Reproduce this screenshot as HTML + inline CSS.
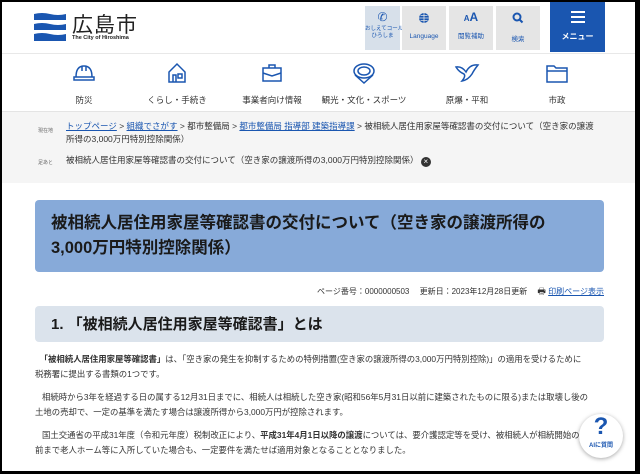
<!DOCTYPE html>
<html><head><meta charset="utf-8"><style>
*{margin:0;padding:0;box-sizing:border-box}
body{width:640px;height:474px;overflow:hidden;background:#000;font-family:"Liberation Sans","Noto Sans CJK JP",sans-serif;color:#333}
#pg{position:absolute;left:2px;top:2px;width:633px;height:469px;background:#fff;overflow:hidden}
.abs{position:absolute}
.btn{position:absolute;top:4px;height:44px;background:#e5e5e5;text-align:center;font-size:6.5px;color:#1a56b0}
.nav{position:absolute;top:60px;text-align:center;font-size:8.5px;color:#333;width:100px}
.nav svg{display:block;margin:0 auto 10px}
.bc{font-size:8.5px;color:#333;line-height:13px}
.bc a{color:#1a56b0;text-decoration:underline}
p{font-size:8.4px;line-height:15px;color:#333;white-space:nowrap}
</style></head><body><div id="pg">
<svg class="abs" style="left:32px;top:10px" width="32" height="30" viewBox="0 0 32 30"><g fill="#1a56b0"><path d="M0 2 Q8 0 16 2 Q24 4 32 2 V8 H0Z"/><path d="M0 12 Q8 10 16 12 Q24 14 32 12 V18 H0Z"/><path d="M0 22 Q8 20 16 22 Q24 24 32 22 V29 H0Z"/></g></svg>
<div class="abs" style="left:70px;top:7px;font-size:21px;color:#222;letter-spacing:1px">広島市</div>
<div class="abs" style="left:70px;top:33px;font-size:5.5px;font-weight:bold;color:#222">The City of Hiroshima</div>
<div class="btn" style="left:363px;width:35px;background:#d7e0ea;font-size:5.5px"><div style="font-size:12px;margin-top:4px">✆</div><div style="line-height:7px;margin-top:2px;white-space:nowrap">おしえてコール<br>ひろしま</div></div>
<div class="btn" style="left:400px;width:44px"><svg width="12" height="12" viewBox="0 0 12 12" style="margin-top:6px"><circle cx="6" cy="6" r="5" fill="#1a56b0"/><path d="M1 6h10M6 1v10M2.5 3.5h7M2.5 8.5h7" stroke="#e5e5e5" stroke-width=".8"/></svg><div style="margin-top:7px">Language</div></div>
<div class="btn" style="left:447px;width:44px"><div style="font-size:12px;margin-top:4px;font-weight:bold"><span style="font-size:8px">A</span>A</div><div style="margin-top:6px">閲覧補助</div></div>
<div class="btn" style="left:494px;width:44px"><svg width="12" height="12" viewBox="0 0 12 12" style="margin-top:6px"><circle cx="5" cy="5" r="3.5" fill="none" stroke="#1a56b0" stroke-width="2"/><path d="M7.5 7.5l3 3" stroke="#1a56b0" stroke-width="2"/></svg><div style="margin-top:7px">検索</div></div>
<div class="abs" style="left:548px;top:0;width:55px;height:50px;background:#1a56b0;color:#fff;text-align:center"><div style="margin:9px auto 0;width:14px"><div style="height:2px;background:#fff;margin-bottom:3px"></div><div style="height:2px;background:#fff;margin-bottom:3px"></div><div style="height:2px;background:#fff"></div></div><div style="font-size:8px;font-weight:bold;margin-top:8px">メニュー</div></div>
<div class="abs" style="left:0;top:51px;width:633px;height:1px;background:#e8e8e8"></div>
<div class="nav" style="left:32px"><svg width="22" height="22" viewBox="0 0 22 22" fill="none" stroke="#1a56b0" stroke-width="1.5"><path d="M3 15 Q3 4 11 4 Q19 4 19 15 Z M1 15h20v3H1z M9 4v5 M13 4v5"/></svg>防災</div>
<div class="nav" style="left:125px"><svg width="22" height="22" viewBox="0 0 22 22" fill="none" stroke="#1a56b0" stroke-width="1.5"><path d="M3 10 L11 2 L19 10 V20 H3Z M7 20v-7h3v7 M12 12h4v4h-4z"/></svg>くらし・手続き</div>
<div class="nav" style="left:220px"><svg width="22" height="22" viewBox="0 0 22 22" fill="none" stroke="#1a56b0" stroke-width="1.5"><rect x="2" y="6" width="18" height="13"/><path d="M8 6V3h6v3 M2 11l9 3 9-3"/></svg>事業者向け情報</div>
<div class="nav" style="left:312px"><svg width="24" height="22" viewBox="0 0 24 22" fill="none" stroke="#1a56b0" stroke-width="1.5"><ellipse cx="12" cy="9" rx="10" ry="7"/><ellipse cx="12" cy="9" rx="6" ry="4"/><path d="M3 13 L12 21 L21 13"/></svg>観光・文化・スポーツ</div>
<div class="nav" style="left:415px"><svg width="26" height="22" viewBox="0 0 26 22" fill="none" stroke="#1a56b0" stroke-width="1.5"><path d="M2 5 Q8 4 12 10 Q16 2 24 3 Q20 8 18 12 Q14 18 8 19 Q12 14 10 12 Q5 10 2 5Z"/></svg>原爆・平和</div>
<div class="nav" style="left:505px"><svg width="24" height="22" viewBox="0 0 24 22" fill="none" stroke="#1a56b0" stroke-width="1.5"><path d="M2 4h7l2 2h11v14H2z M2 9h20"/></svg>市政</div>
<div class="abs" style="left:0;top:109px;width:633px;height:72px;background:#f5f5f5;border-top:1px solid #e4e4e4"></div>
<div class="abs bc" style="left:36px;top:123px;font-size:5px;color:#666">現在地</div>
<div class="abs bc" style="left:64px;top:118px;width:540px"><a>トップページ</a> &gt; <a>組織でさがす</a> &gt; 都市整備局 &gt; <a>都市整備局 指導部 建築指導課</a> &gt; 被相続人居住用家屋等確認書の交付について（空き家の譲渡<br>所得の3,000万円特別控除関係）</div>
<div class="abs bc" style="left:36px;top:155px;font-size:5px;color:#666">足あと</div>
<div class="abs bc" style="left:64px;top:152px">被相続人居住用家屋等確認書の交付について（空き家の譲渡所得の3,000万円特別控除関係） <span style="display:inline-block;width:10px;height:10px;border-radius:50%;background:#333;color:#fff;font-size:8px;line-height:10px;text-align:center;vertical-align:-1px">×</span></div>
<div class="abs" style="left:33px;top:198px;width:569px;height:72px;background:#87aad9;border-radius:4px;padding:11px 16px;font-size:16.5px;font-weight:bold;line-height:25px;color:#1a1a1a;white-space:nowrap">被相続人居住用家屋等確認書の交付について（空き家の譲渡所得の<br>3,000万円特別控除関係）</div>
<div class="abs" style="left:300px;top:282px;width:302px;text-align:right;font-size:8px;color:#333">ページ番号：0000000503　 更新日：2023年12月28日更新　 <span style="font-size:9px">🖶</span> <span style="color:#1a56b0;text-decoration:underline">印刷ページ表示</span></div>
<div class="abs" style="left:33px;top:304px;width:569px;height:36px;background:#dbe3ec;border-radius:4px;padding:7px 16px;font-size:15px;font-weight:bold;color:#1a1a1a">1.&nbsp;「被相続人居住用家屋等確認書」とは</div>
<div class="abs" style="left:33px;top:350px;width:572px">
<p>&nbsp;&nbsp;<b>「被相続人居住用家屋等確認書」</b>は、「空き家の発生を抑制するための特例措置(空き家の譲渡所得の3,000万円特別控除)」の適用を受けるために<br>税務署に提出する書類の1つです。</p>
<p style="margin-top:8px">&nbsp;&nbsp;&nbsp;相続時から3年を経過する日の属する12月31日までに、相続人は相続した空き家(昭和56年5月31日以前に建築されたものに限る)または取壊し後の<br>土地の売却で、一定の基準を満たす場合は譲渡所得から3,000万円が控除されます。</p>
<p style="margin-top:8px">&nbsp;&nbsp;&nbsp;国土交通省の平成31年度（令和元年度）税制改正により、<b>平成31年4月1日以降の譲渡</b>については、要介護認定等を受け、被相続人が相続開始の直<br>前まで老人ホーム等に入所していた場合も、一定要件を満たせば適用対象となることとなりました。</p>
</div>
<div class="abs" style="left:577px;top:412px;width:44px;height:44px;border-radius:50%;background:#fff;box-shadow:0 1px 4px rgba(0,0,0,.35);text-align:center;color:#1a56b0"><div style="font-size:24px;font-weight:bold;line-height:26px">?</div><div style="font-size:6px;font-weight:bold">AIに質問</div></div>
</div></body></html>
